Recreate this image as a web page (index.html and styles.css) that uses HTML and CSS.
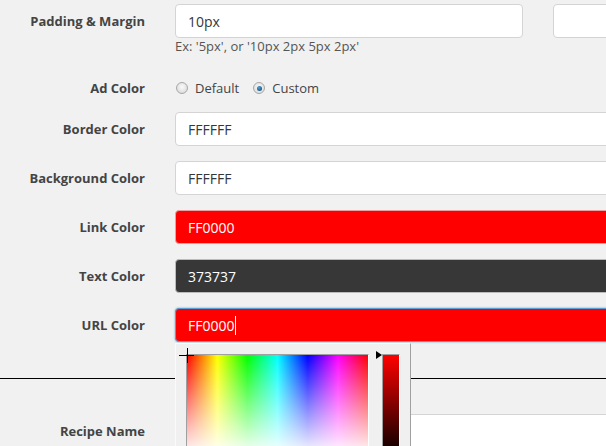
FILE: index.html
```html
<!DOCTYPE html>
<html>
<head>
<meta charset="utf-8">
<link rel="stylesheet" href="styles.css">
</head>
<body>
<div class="form">
  <div class="row row-first">
    <div class="label">Padding &amp; Margin</div>
    <input class="field field-padding" type="text" value="10px">
    <input class="field field-margin" type="text" value="">
  </div>
  <div class="hint">Ex: '5px', or '10px 2px 5px 2px'</div>

  <div class="row row-radio">
    <div class="label">Ad Color</div>
    <label class="choice"><span class="radio"></span>Default</label>
    <label class="choice"><span class="radio radio-on"></span>Custom</label>
  </div>

  <div class="row">
    <div class="label">Border Color</div>
    <input class="field field-wide" type="text" value="FFFFFF">
  </div>
  <div class="row">
    <div class="label">Background Color</div>
    <input class="field field-wide" type="text" value="FFFFFF">
  </div>
  <div class="row">
    <div class="label">Link Color</div>
    <input class="field field-wide field-red" type="text" value="FF0000">
  </div>
  <div class="row">
    <div class="label">Text Color</div>
    <input class="field field-wide field-dark" type="text" value="373737">
  </div>
  <div class="row row-url">
    <div class="label">URL Color</div>
    <div class="field field-wide field-red field-focus"><span class="val">FF0000</span><span class="caret"></span></div>
    <div class="picker">
      <div class="hs-frame">
        <div class="hs"></div>
        <div class="cross cross-h"></div>
        <div class="cross cross-v"></div>
      </div>
      <div class="slider-col">
        <div class="arrow"></div>
        <div class="v-frame"><div class="v"></div></div>
      </div>
    </div>
  </div>

  <div class="divider"></div>

  <div class="row row-recipe">
    <div class="label">Recipe Name</div>
    <input class="field field-wide" type="text" value="">
  </div>
</div>
</body>
</html>
```

FILE: styles.css
```css
html, body {
  margin: 0;
  padding: 0;
  background: #f1f1f1;
  overflow: hidden;
}
body {
  width: 606px;
  height: 446px;
  font-family: "Open Sans", "Liberation Sans", sans-serif;
  color: #444;
}
.form {
  display: flex;
  flex-direction: column;
}
.row {
  display: flex;
  align-items: center;
  margin-top: 15px;
  height: 34px;
  flex-shrink: 0;
}
.row-first {
  margin-top: 4px;
}
.label {
  width: 145px;
  padding-right: 30px;
  text-align: right;
  font-weight: bold;
  font-size: 13px;
  color: #444;
  flex-shrink: 0;
  white-space: nowrap;
}
.field {
  box-sizing: border-box;
  height: 34px;
  border: 1px solid #d4d4d4;
  border-radius: 4px;
  background: #fff;
  font-family: "Open Sans", "Liberation Sans", sans-serif;
  font-size: 14px;
  color: #32373c;
  padding: 0 12px;
  margin: 0;
  outline: none;
  flex-shrink: 0;
}
.field-padding {
  width: 348px;
}
.field-margin {
  width: 120px;
  margin-left: 30px;
}
.field-wide {
  width: 460px;
}
.field-red {
  background: #ff0000;
  color: #fff;
  border-color: #e8a0a0;
}
.field-dark {
  background: #373737;
  color: #fff;
  border-color: #bbb;
}
.field-focus {
  display: flex;
  align-items: center;
  border-color: #5b9dd9;
  box-shadow: 0 0 2px rgba(30, 140, 190, 0.8);
}
.caret {
  display: inline-block;
  width: 1px;
  height: 19px;
  background: #fff;
  margin-left: 1px;
}
.hint {
  margin-left: 175px;
  font-size: 13px;
  line-height: 16px;
  color: #555;
  margin-top: 0;
}
.row-radio {
  margin-top: 24px;
  height: 20px;
}
.row-radio + .row {
  margin-top: 14px;
}
.choice {
  display: flex;
  align-items: center;
  font-size: 13px;
  color: #444;
  margin-right: 14px;
}
.choice:first-of-type {
  margin-left: 1px;
}
.radio {
  box-sizing: border-box;
  width: 12px;
  height: 12px;
  border-radius: 50%;
  border: 1px solid #a8a8a8;
  background: radial-gradient(circle at 50% 40%, #fafafa, #d4d4d4);
  margin-right: 7px;
  display: inline-flex;
  align-items: center;
  justify-content: center;
}
.radio-on::after {
  content: "";
  width: 5px;
  height: 5px;
  border-radius: 50%;
  background: radial-gradient(circle at 40% 35%, #4aa0d8, #0d3f66);
}
.row-url {
  position: relative;
}
.picker {
  position: absolute;
  left: 175px;
  top: calc(100% + 1px);
  z-index: 5;
  box-sizing: border-box;
  width: 236px;
  height: 130px;
  padding: 10px;
  background: #f0f0f0;
  border: 1px solid;
  border-color: #fafafa #a0a0a0 #a0a0a0 #fafafa;
  display: flex;
  align-items: flex-start;
}
.hs-frame {
  position: relative;
  border: 1px solid;
  border-color: #a0a0a0 #fff #fff #a0a0a0;
  flex-shrink: 0;
}
.hs {
  width: 181px;
  height: 101px;
  background:
    linear-gradient(to bottom, rgba(255,255,255,0), #fff),
    linear-gradient(to right, #f00 0%, #ff0 16.67%, #0f0 33.33%, #0ff 50%, #00f 66.67%, #f0f 83.33%, #f00 100%);
}
.cross {
  position: absolute;
  background: #000;
}
.cross-h {
  left: -8px;
  top: 0;
  width: 15px;
  height: 1px;
}
.cross-v {
  left: 0;
  top: -7px;
  width: 1px;
  height: 15px;
}
.slider-col {
  display: flex;
  align-items: flex-start;
  margin-left: 7px;
}
.arrow {
  width: 0;
  height: 0;
  border-top: 4.5px solid transparent;
  border-bottom: 4.5px solid transparent;
  border-left: 6px solid #000;
  margin-top: -3px;
}
.v-frame {
  border: 1px solid;
  border-color: #a0a0a0 #fff #fff #a0a0a0;
}
.v {
  width: 16px;
  height: 101px;
  background: linear-gradient(to bottom, #f00, #000);
}
.divider {
  height: 1px;
  background: #000;
  margin-top: 36px;
  flex-shrink: 0;
}
.row-recipe {
  margin-top: 35px;
}
```
